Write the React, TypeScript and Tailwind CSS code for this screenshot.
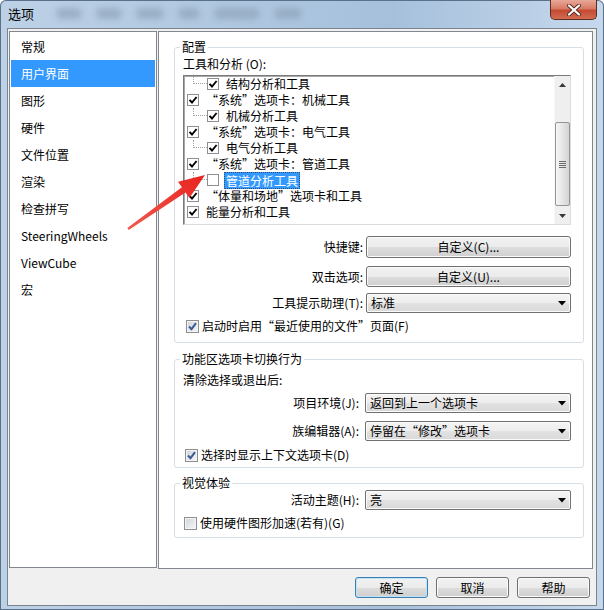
import React from "react";

type Row = { level: 0 | 1; text: string; checked: boolean; selected?: boolean };

const rows: Row[] = [
  { level: 1, text: "结构分析和工具", checked: true },
  { level: 0, text: "“系统”选项卡：机械工具", checked: true },
  { level: 1, text: "机械分析工具", checked: true },
  { level: 0, text: "“系统”选项卡：电气工具", checked: true },
  { level: 1, text: "电气分析工具", checked: true },
  { level: 0, text: "“系统”选项卡：管道工具", checked: true },
  { level: 1, text: "管道分析工具", checked: false, selected: true },
  { level: 0, text: "“体量和场地”选项卡和工具", checked: true },
  { level: 0, text: "能量分析和工具", checked: true },
];

const navItems = ["常规", "用户界面", "图形", "硬件", "文件位置", "渲染", "检查拼写", "SteeringWheels", "ViewCube", "宏"];

function TreeBox({ checked }: { checked: boolean }) {
  return (
    <div className="w-[12px] h-[12px] border border-[#8f8f8f] bg-white flex items-center justify-center shrink-0">
      {checked && (
        <svg width="10" height="10" viewBox="0 0 10 10">
          <path d="M1.5 4.8 L4 7.5 L8.6 2" fill="none" stroke="#000" strokeWidth="1.9" />
        </svg>
      )}
    </div>
  );
}

function WinCheck({ checked }: { checked: boolean }) {
  return (
    <div className="w-[13px] h-[13px] border border-[#8e8f8f] bg-[linear-gradient(135deg,#cfd3d8,#f7f7f7)] shadow-[inset_0_0_0_1px_#f4f4f4] flex items-center justify-center shrink-0">
      {checked && (
        <svg width="9" height="9" viewBox="0 0 9 9" className="overflow-visible">
          <path d="M1 4.5 L3.5 7.2 L8 1.2" fill="none" stroke="#3b5a96" strokeWidth="2" />
        </svg>
      )}
    </div>
  );
}

function Btn({ children, def }: { children: React.ReactNode; def?: boolean }) {
  return (
    <div
      className={
        def
          ? "h-full w-full flex items-center justify-center rounded-[3px] border border-[#3c7fb1] shadow-[inset_0_0_0_1px_#bfe3f8] bg-[linear-gradient(to_bottom,#f2f2f2_0%,#ebebeb_50%,#dddddd_51%,#cfcfcf_100%)] leading-[14px]"
          : "h-full w-full flex items-center justify-center rounded-[3px] border border-[#707070] shadow-[inset_0_0_0_1px_#fbfbfb] bg-[linear-gradient(to_bottom,#f2f2f2_0%,#ebebeb_50%,#dddddd_51%,#cfcfcf_100%)] leading-[14px]"
      }
    >
      {children}
    </div>
  );
}

function Select({ text }: { text: string }) {
  return (
    <div className="flex-1 h-full flex items-center pl-[4px] pr-[4px] rounded-[2px] border border-[#707070] shadow-[inset_0_0_0_1px_#fbfbfb] bg-[linear-gradient(to_bottom,#f4f4f4_0%,#ededed_50%,#e2e2e2_51%,#d8d8d8_100%)]">
      <span className="flex-1 leading-[14px]">{text}</span>
      <svg width="8" height="5" viewBox="0 0 8 5">
        <path d="M0 0H8L4 4.5Z" fill="#000" />
      </svg>
    </div>
  );
}

function Scrollbar() {
  return (
    <div className="w-[16px] h-full flex flex-col bg-[#efefef] border-l border-l-[#f7f7f7]">
      <div className="h-[17px] flex items-center justify-center shrink-0">
        <svg width="7" height="4" viewBox="0 0 7 4">
          <path d="M0 4H7L3.5 0Z" fill="#3a3a3a" />
        </svg>
      </div>
      <div className="flex-1 pt-[29px]">
        <div className="h-[84px] rounded-[2px] border border-[#959595] bg-[linear-gradient(to_right,#f6f6f6,#e6e6e6_50%,#d3d3d3)] flex flex-col items-center justify-center gap-[1px]">
          <div className="w-[7px] h-[1px] bg-[#6a6a6a]" />
          <div className="w-[7px] h-[1px] bg-[#6a6a6a]" />
          <div className="w-[7px] h-[1px] bg-[#6a6a6a]" />
          <div className="w-[7px] h-[1px] bg-[#6a6a6a]" />
        </div>
      </div>
      <div className="h-[16px] flex items-center justify-center shrink-0">
        <svg width="7" height="4" viewBox="0 0 7 4">
          <path d="M0 0H7L3.5 4Z" fill="#3a3a3a" />
        </svg>
      </div>
    </div>
  );
}

function Tree() {
  return (
    <div className="mt-[3px] h-[150px] flex bg-white border-t border-l border-t-[#7a7a7a] border-l-[#7a7a7a] border-r border-b border-r-[#dcdcdc] border-b-[#dcdcdc] shadow-[inset_1px_1px_0_#a8a8a8]">
      <div className="flex-1 overflow-hidden">
        {rows.map((r, i) => (
          <div key={i} className="h-[16px] flex items-center pl-[3px] whitespace-nowrap">
            {r.level === 1 && (
              <div className="ml-[6px] w-[14px] h-[16px] shrink-0">
                <div className="h-[8px] border-l border-b border-dotted border-[#a0a0a0]" />
              </div>
            )}
            <TreeBox checked={r.checked} />
            {r.selected ? (
              <span className="ml-[5px] px-[1px] h-[17px] leading-[15px] bg-[#3399ff] text-white border border-dotted border-[#2a4f7a]">
                {r.text}
              </span>
            ) : (
              <span className="ml-[5px] px-[2px] leading-[16px]">{r.text}</span>
            )}
          </div>
        ))}
      </div>
      <Scrollbar />
    </div>
  );
}

export default function App() {
  return (
    <div className="relative w-[604px] h-[610px] overflow-hidden flex flex-col rounded-t-[6px] bg-[linear-gradient(to_right,#bdd1e6,#a6c0dc_65%,#c6d8ec)] shadow-[inset_0_0_0_1px_#5b718b] font-['Noto_Sans_CJK_SC',sans-serif] text-[12px] text-black">
      {/* title bar */}
      <div className="h-[28px] flex items-start shrink-0">
        <div className="pl-[8px] pt-[5px] text-[13px] leading-[18px] text-black">选项</div>
        <div className="flex items-center gap-[14px] pl-[22px] pt-[8px] opacity-70">
          <div className="w-[26px] h-[11px] rounded-full bg-[#8ea3ba] blur-[3px]" />
          <div className="w-[26px] h-[11px] rounded-full bg-[#8ea3ba] blur-[3px]" />
          <div className="w-[28px] h-[11px] rounded-full bg-[#8ea3ba] blur-[3px]" />
          <div className="w-[22px] h-[11px] rounded-full bg-[#8ea3ba] blur-[3px]" />
          <div className="w-[46px] h-[11px] rounded-full bg-[#8ea3ba] blur-[3px]" />
          <div className="w-[28px] h-[11px] rounded-full bg-[#8ea3ba] blur-[3px]" />
        </div>
        <div className="flex-1" />
        <div className="mr-[7px] w-[47px] h-[20px] rounded-b-[5px] border border-t-0 border-[#5f2c22] bg-[linear-gradient(to_bottom,#e9a898_0%,#d87a64_45%,#c44a32_55%,#d36c52_100%)] flex items-center justify-center">
          <svg width="14" height="12" viewBox="0 0 14 12">
            <path d="M2 1.5 L12 10.5 M12 1.5 L2 10.5" stroke="#5a2a24" strokeWidth="4" strokeLinecap="round" />
            <path d="M2 1.5 L12 10.5 M12 1.5 L2 10.5" stroke="#ffffff" strokeWidth="2.2" strokeLinecap="round" />
          </svg>
        </div>
      </div>

      {/* client area */}
      <div className="flex-1 mx-[7px] mb-[4px] border border-[#7a848f] bg-[#f0f0f0] flex flex-col">
        <div className="flex pt-[2px] pl-[1px] gap-[1px]">
          {/* left list */}
          <div className="w-[148px] h-[537px] border border-[#828790] bg-white pt-[1px] px-[1px] flex flex-col">
            {navItems.map((it) =>
              it === "用户界面" ? (
                <div key={it} className="h-[27px] flex items-center pl-[10px] bg-[#3399ff] text-white">
                  {it}
                </div>
              ) : (
                <div key={it} className="h-[27px] flex items-center pl-[10px]">
                  {it}
                </div>
              )
            )}
          </div>

          {/* right panel */}
          <div className="w-[435px] h-[538px] border border-[#828790] bg-white pl-[15px] pt-[8px] flex flex-col">
            {/* group 1 */}
            <fieldset className="w-[410px] border border-[#d5dfe5] rounded-[3px]">
              <legend className="ml-[5px] px-[2px] leading-[14px]">配置</legend>
              <div className="pl-[8px] pr-[12px] pb-[9px] flex flex-col">
                <div className="mt-[2px] leading-[16px]">工具和分析 (O):</div>
                <Tree />
                <div className="mt-[11px] h-[22px] flex items-center">
                  <div className="w-[180px] text-right">快捷键:</div>
                  <div className="ml-[3px] flex-1 h-full">
                    <Btn>自定义(C)...</Btn>
                  </div>
                </div>
                <div className="mt-[8px] h-[21px] flex items-center">
                  <div className="w-[180px] text-right">双击选项:</div>
                  <div className="ml-[3px] flex-1 h-full">
                    <Btn>自定义(U)...</Btn>
                  </div>
                </div>
                <div className="mt-[6px] h-[20px] flex items-center">
                  <div className="w-[180px] text-right">工具提示助理(T):</div>
                  <div className="ml-[3px] flex-1 h-full flex">
                    <Select text="标准" />
                  </div>
                </div>
                <div className="mt-[6px] h-[14px] flex items-center pl-[3px] gap-[3px]">
                  <WinCheck checked />
                  <span className="leading-[14px]">启动时启用“最近使用的文件”页面(F)</span>
                </div>
              </div>
            </fieldset>

            {/* group 2 */}
            <fieldset className="mt-[9px] w-[410px] border border-[#d5dfe5] rounded-[3px]">
              <legend className="ml-[5px] px-[2px] leading-[14px]">功能区选项卡切换行为</legend>
              <div className="pl-[8px] pr-[12px] pb-[5px] flex flex-col">
                <div className="mt-[6px] leading-[16px]">清除选择或退出后:</div>
                <div className="mt-[5px] h-[20px] flex items-center">
                  <div className="w-[176px] text-right">项目环境(J):</div>
                  <div className="ml-[6px] flex-1 h-full flex">
                    <Select text="返回到上一个选项卡" />
                  </div>
                </div>
                <div className="mt-[8px] h-[20px] flex items-center">
                  <div className="w-[176px] text-right">族编辑器(A):</div>
                  <div className="ml-[6px] flex-1 h-full flex">
                    <Select text="停留在“修改”选项卡" />
                  </div>
                </div>
                <div className="mt-[7px] h-[14px] flex items-center pl-[2px] gap-[3px]">
                  <WinCheck checked />
                  <span className="leading-[14px]">选择时显示上下文选项卡(D)</span>
                </div>
              </div>
            </fieldset>

            {/* group 3 */}
            <fieldset className="mt-[8px] w-[410px] border border-[#d5dfe5] rounded-[3px]">
              <legend className="ml-[5px] px-[2px] leading-[14px]">视觉体验</legend>
              <div className="pl-[8px] pr-[12px] pb-[7px] flex flex-col">
                <div className="h-[20px] flex items-center">
                  <div className="w-[176px] text-right">活动主题(H):</div>
                  <div className="ml-[6px] flex-1 h-full flex">
                    <Select text="亮" />
                  </div>
                </div>
                <div className="mt-[6px] h-[14px] flex items-center pl-[1px] gap-[3px]">
                  <WinCheck checked={false} />
                  <span className="leading-[14px]">使用硬件图形加速(若有)(G)</span>
                </div>
              </div>
            </fieldset>
          </div>
        </div>

        {/* bottom buttons */}
        <div className="mt-[8px] h-[21px] flex justify-end gap-[8px] pr-[6px]">
          <div className="w-[73px] h-full">
            <Btn def>确定</Btn>
          </div>
          <div className="w-[73px] h-full">
            <Btn>取消</Btn>
          </div>
          <div className="w-[73px] h-full">
            <Btn>帮助</Btn>
          </div>
        </div>
      </div>

      {/* red annotation arrow */}
      <svg className="absolute left-0 top-0 pointer-events-none" width="604" height="610" viewBox="0 0 604 610">
        <defs>
          <linearGradient id="ar" x1="0" y1="1" x2="1" y2="0">
            <stop offset="0" stopColor="#f25a4e" />
            <stop offset="1" stopColor="#e8231f" />
          </linearGradient>
        </defs>
        <polygon
          points="127.3,228 181.9,187.3 178,181.7 205,175 189.4,198.1 185.5,192.5 128.7,230"
          fill="url(#ar)"
        />
      </svg>
    </div>
  );
}
